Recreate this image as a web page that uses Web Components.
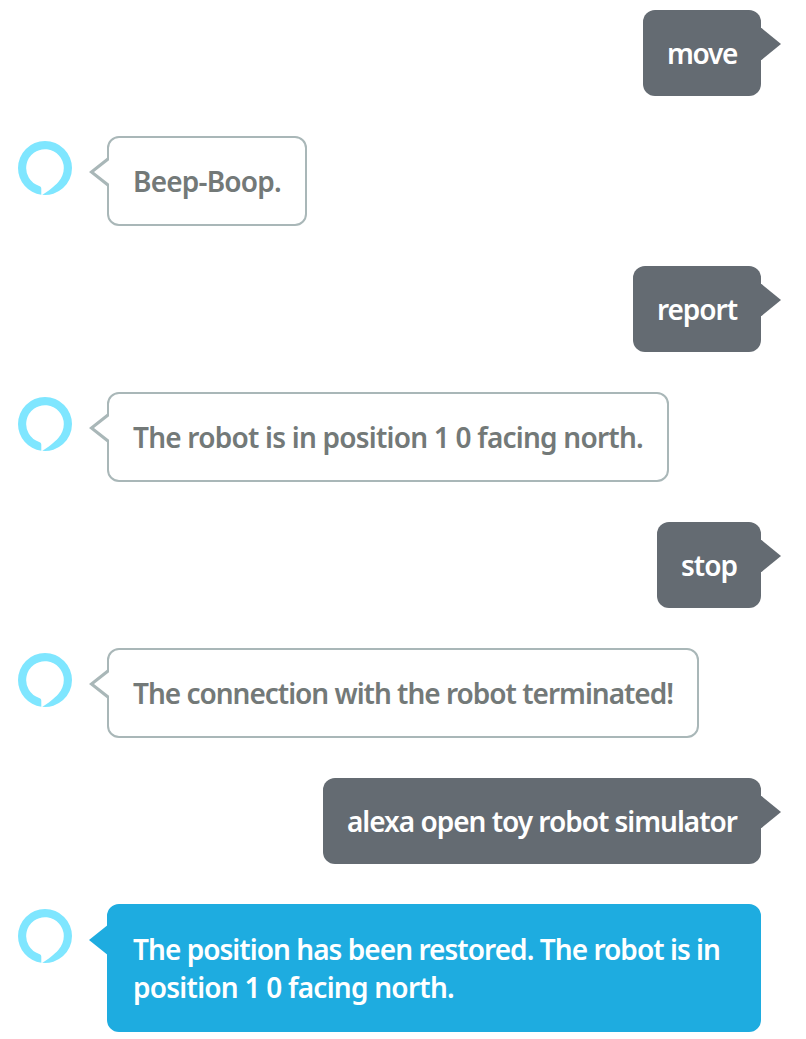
<!DOCTYPE html>
<html lang="en">
<head>
<meta charset="utf-8">
<title>Conversation</title>
<style>
body { margin: 0; background: #fff; font: 560 28px/38px "Noto Sans", "Open Sans", sans-serif; }
</style>
</head>
<body>
<chat-log>
  <chat-message from="user"><text-line width="70">move</text-line></chat-message>
  <chat-message from="alexa"><text-line width="148">Beep-Boop.</text-line></chat-message>
  <chat-message from="user"><text-line width="80">report</text-line></chat-message>
  <chat-message from="alexa"><text-line width="510">The robot is in position 1 0 facing north.</text-line></chat-message>
  <chat-message from="user"><text-line width="56">stop</text-line></chat-message>
  <chat-message from="alexa"><text-line width="540">The connection with the robot terminated!</text-line></chat-message>
  <chat-message from="user"><text-line width="390">alexa open toy robot simulator</text-line></chat-message>
  <chat-message from="alexa" active><text-line width="587">The position has been restored. The robot is in</text-line><text-line width="321">position 1 0 facing north.</text-line></chat-message>
</chat-log>
<script>
customElements.define('chat-log', class extends HTMLElement {
  constructor() {
    super();
    this.attachShadow({ mode: 'open' }).innerHTML = `
      <style>:host { display: flex; flex-direction: column; gap: 40px; box-sizing: border-box; padding: 10px 45px 7px 18px; }</style>
      <slot></slot>`;
  }
});

/* One line of text, tracked so that it fills the width it is given. */
customElements.define('text-line', class extends HTMLElement {
  constructor() {
    super();
    this.attachShadow({ mode: 'open' }).innerHTML = `
      <style>:host { display: block; white-space: nowrap; height: 38px; } span { display: inline-block; }</style>
      <span><slot></slot></span>`;
  }
  connectedCallback() {
    const span = this.shadowRoot.querySelector('span');
    const width = Number(this.getAttribute('width'));
    this.style.width = width + 'px';
    const natural = span.getBoundingClientRect().width;
    span.style.letterSpacing = (width - natural) / this.textContent.length + 'px';
  }
});

customElements.define('alexa-ring', class extends HTMLElement {
  constructor() {
    super();
    this.attachShadow({ mode: 'open' }).innerHTML = `
      <style>:host { display: block; flex: none; width: 54px; height: 54px; margin-top: 5px; } svg { display: block; }</style>
      <svg width="54" height="54" viewBox="0 0 54 54" aria-hidden="true">
        <path fill="#7fe6ff" d="M27 0A27 27 0 0 0 0 27A27 27 0 0 0 23.3 53.74V47.7C23.3 46.2 22.7 45.5 21.2 44.9A18.8 18.8 0 1 1 45.8 27C45.8 32 44 36.6 40.3 41C36.5 45.4 30 50.3 24.2 53.85A27 27 0 0 0 54 27A27 27 0 0 0 27 0Z"/>
      </svg>`;
  }
});

customElements.define('chat-message', class extends HTMLElement {
  constructor() {
    super();
    this.attachShadow({ mode: 'open' });
  }
  connectedCallback() {
    const user = this.getAttribute('from') === 'user';
    const active = this.hasAttribute('active');
    const tail = user
      ? '<svg class="tail" width="21" height="32" viewBox="0 0 21 32"><path fill="#646b72" d="M0 -0.4H1L21 16L1 32.4H0Z"/></svg>'
      : active
      ? '<svg class="tail" width="20" height="32" viewBox="0 0 20 32"><path fill="#1eace0" d="M20 0.1L0 16L20 31.9Z"/></svg>'
      : '<svg class="tail" width="20" height="32" viewBox="0 0 20 32"><path fill="#fff" d="M20 2.4L3 16L20 29.6Z"/><path fill="#a9b7b8" d="M18 1.7L0 16L18 30.3H20V27.8L5 16L20 4.2V1.7Z"/></svg>';
    this.shadowRoot.innerHTML = `
      <style>
        :host { display: flex; align-items: flex-start; gap: 35px; color: #737978; }
        :host([from="user"]) { justify-content: flex-end; color: #fff; }
        :host([active]) { color: #fff; }
        .bubble { position: relative; padding: 24px; border: 2px solid #a9b7b8; border-radius: 12px; background: #fff; }
        :host([from="user"]) .bubble { border: 0; background: #646b72; }
        :host([active]) .bubble { box-sizing: border-box; flex: 1; border-color: #1eace0; background: #1eace0; }
        .tail { position: absolute; display: block; top: 18px; left: -20px; }
        :host([from="user"]) .tail { left: auto; right: -20px; }
      </style>
      ${user ? '' : '<alexa-ring></alexa-ring>'}
      <div class="bubble">${tail}<slot></slot></div>`;
  }
});
</script>
</body>
</html>
